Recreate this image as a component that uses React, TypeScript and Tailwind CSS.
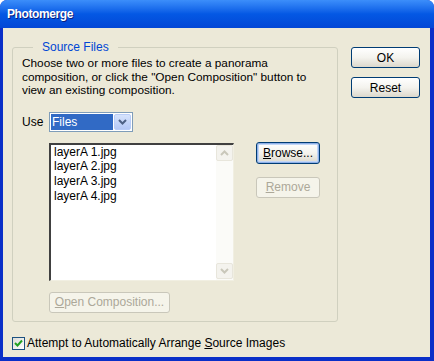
import { ReactNode } from 'react'

const files = ['layerA 1.jpg', 'layerA 2.jpg', 'layerA 3.jpg', 'layerA 4.jpg']

function XpButton({ children, disabled, focused, className = '' }: { children: ReactNode; disabled?: boolean; focused?: boolean; className?: string }) {
  const base = 'flex items-center justify-center rounded-[3px] border text-[11px] leading-none'
  const look = disabled
    ? 'border-[#C9C7BA] bg-[#F5F4EA] text-[#ACA899]'
    : focused
      ? 'border-[#003C74] bg-gradient-to-b from-white via-[#F4F3EE] to-[#DCD8CC] text-black shadow-[inset_0_0_0_1px_#8EB0E8,inset_0_0_0_2px_#C2D6F6]'
      : 'border-[#003C74] bg-gradient-to-b from-white via-[#F4F3EE] to-[#DCD8CC] text-black'
  return (
    <button type="button" className={`${base} ${look} ${className}`}>
      {children}
    </button>
  )
}

function Chevron({ up, color }: { up?: boolean; color: string }) {
  return (
    <svg width="9" height="6" viewBox="0 0 9 6">
      <path d={up ? 'M1 5 L4.5 1.5 L8 5' : 'M1 1 L4.5 4.5 L8 1'} fill="none" stroke={color} strokeWidth="2" />
    </svg>
  )
}

export default function App() {
  return (
    <div className="flex h-[361px] w-[434px] flex-col overflow-hidden rounded-t-[7px] bg-[#0A2FC8] font-['Liberation_Sans',Arial,sans-serif]">
      <div className="flex h-[28px] shrink-0 items-center bg-gradient-to-b from-[#3C8EFA] via-[#0458E4] to-[#0347D6] pl-[7px]">
        <span className="text-[12px] font-bold tracking-[-0.4px] text-white [text-shadow:1px_1px_0_#0A1E7C]">Photomerge</span>
      </div>

      <div className="mb-[4px] ml-[3px] mr-[4px] flex flex-1 items-start bg-[#ECE9D8] pl-[9px] pt-[19px] text-[11px] text-black">
        <div className="flex flex-col">
          <div className="flex h-[275px] w-[326px] flex-col rounded-[3px] border border-[#D0D0BF] pl-[9px]">
            <div className="-mt-[8px] ml-[11px] w-fit bg-[#ECE9D8] px-[9px] text-[12px] leading-[15px] text-[#0046D5]">
              Source Files
            </div>
            <p className="mt-[2px] text-[11.8px] leading-[13.5px]">
              Choose two or more files to create a panorama
              <br />
              composition, or click the "Open Composition" button to
              <br />
              view an existing composition.
            </p>

            <div className="mt-[14px] flex h-[20px] items-center">
              <span className="w-[27px] text-[12px]">Use</span>
              <div className="flex h-[20px] w-[84px] items-center border border-[#7F9DB9] bg-white p-[1px]">
                <div className="flex h-full flex-1 items-center bg-[#316AC5] pl-[1px] text-[12px] text-white">Files</div>
                <div className="ml-[1px] flex h-full w-[17px] items-center justify-center rounded-[2px] border border-[#B9CDF8] bg-gradient-to-b from-[#D6E3FC] to-[#B4C8F6]">
                  <Chevron color="#4D6185" />
                </div>
              </div>
            </div>

            <div className="mt-[11px] flex items-start">
              <div className="ml-[27px] flex h-[138px] w-[185px] border-b border-l-2 border-r border-t-2 border-b-[#F1EFE2] border-l-[#404040] border-r-[#F1EFE2] border-t-[#404040] bg-white">
                <ul className="flex-1 pl-[3px] text-[12px] leading-[14.7px]">
                  {files.map((f) => (
                    <li key={f}>{f}</li>
                  ))}
                </ul>
                <div className="flex w-[17px] flex-col justify-between bg-[#FBFBF8] pb-[1px]">
                  <div className="flex h-[16px] items-center justify-center rounded-[2px] border border-[#E8E6DC] bg-[#F4F3EE]">
                    <Chevron up color="#C9C7BA" />
                  </div>
                  <div className="flex h-[16px] items-center justify-center rounded-[2px] border border-[#E8E6DC] bg-[#F4F3EE]">
                    <Chevron color="#C9C7BA" />
                  </div>
                </div>
              </div>
              <div className="ml-[22px] flex flex-col gap-[13px]">
                <XpButton focused className="-mt-[1px] h-[22px] w-[64px] text-[12px]">
                  <span><span className="underline">B</span>rowse...</span>
                </XpButton>
                <XpButton disabled className="h-[21px] w-[64px] text-[12px]">
                  <span><span className="underline">R</span>emove</span>
                </XpButton>
              </div>
            </div>

            <XpButton disabled className="ml-[27px] mt-[11px] h-[21px] w-[121px] text-[12px]">
              <span><span className="underline">O</span>pen Composition...</span>
            </XpButton>
          </div>

          <label className="mt-[12px] flex items-center">
            <span className="flex h-[13px] w-[13px] items-center justify-center border border-[#1C5180] bg-gradient-to-br from-[#DCDCD7] to-white">
              <svg width="9" height="9" viewBox="0 0 9 9">
                <path d="M1 4 L3.5 6.5 L8 1.5" fill="none" stroke="#21A121" strokeWidth="2" />
              </svg>
            </span>
            <span className="ml-[2px] text-[12px]">
              Attempt to Automatically Arrange <span className="underline">S</span>ource Images
            </span>
          </label>
        </div>

        <div className="ml-[13px] flex flex-col gap-[9px]">
          <XpButton className="h-[21px] w-[69px] text-[12px]">OK</XpButton>
          <XpButton className="h-[21px] w-[69px] text-[12px]">Reset</XpButton>
        </div>
      </div>
    </div>
  )
}
